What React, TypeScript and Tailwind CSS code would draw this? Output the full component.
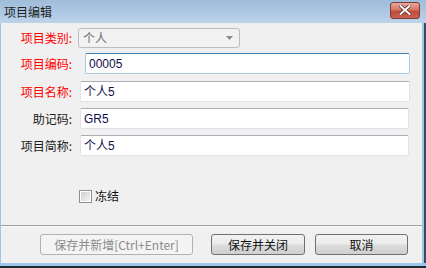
import React from "react";

const font = "font-['Noto_Sans_CJK_SC','Liberation_Sans',sans-serif]";
const inputFont = "font-['Liberation_Sans','Noto_Sans_CJK_SC',sans-serif]";

function Label({ text, red }: { text: string; red?: boolean }) {
  return (
    <div
      className={`w-[71px] shrink-0 text-right text-[12px] leading-[14px] ${
        red ? "text-[#ff0000]" : "text-[#1a1a1a]"
      }`}
    >
      {text}
    </div>
  );
}

function TextBox({ value, focused }: { value: string; focused?: boolean }) {
  return (
    <div
      className={`flex h-[21px] flex-1 items-center rounded-[2px] bg-white pl-[3px] text-[12px] text-[#10104a] ${inputFont} ${
        focused
          ? "border border-[#a8cbe6] border-t-[#3c7fb1]"
          : "border border-[#e2e3ea] border-t-[#abadb3]"
      }`}
    >
      {value}
    </div>
  );
}

function Button({ text, disabled }: { text: string; disabled?: boolean }) {
  return (
    <div
      className={`flex h-[21px] items-center justify-center rounded-[3px] border text-[12px] ${
        disabled
          ? "border-[#adb2b5] bg-[#f4f4f4] text-[#8a8a8a]"
          : "border-[#707070] bg-[linear-gradient(#f2f2f2_0%,#ebebeb_48%,#dddddd_52%,#cfcfcf_100%)] text-[#111]"
      }`}
    >
      {text}
    </div>
  );
}

export default function App() {
  return (
    <div
      className={`flex h-[268px] w-[426px] flex-col overflow-hidden bg-[#c4d8ee] ${font}`}
    >
      {/* Title bar */}
      <div className="flex h-[23px] shrink-0 items-center justify-between bg-[linear-gradient(#9fbcdb,#bcd3ea)] pl-[4px] pr-[6px]">
        <span className="text-[12px] leading-[14px] text-[#1e1e1e]">项目编辑</span>
        <div className="mt-[-3px] flex h-[17px] w-[30px] items-center justify-center rounded-[3px] border border-[#7b3a33] bg-[linear-gradient(#e8a79a_0%,#d47667_45%,#c24a3a_55%,#c9604f_100%)]">
          <svg width="12" height="10" viewBox="0 0 12 10">
            <path
              d="M1.5 1 L10.5 9 M10.5 1 L1.5 9"
              stroke="#5a2a24"
              strokeWidth="3.6"
              strokeLinecap="square"
            />
            <path
              d="M1.5 1 L10.5 9 M10.5 1 L1.5 9"
              stroke="#ffffff"
              strokeWidth="2"
              strokeLinecap="square"
            />
          </svg>
        </div>
      </div>

      {/* Window body with side frames */}
      <div className="flex h-[240px] shrink-0">
        <div className="w-[1px] bg-[#9cc6ea]" />
        {/* Client area */}
        <div className="flex w-[421px] flex-col bg-[#f0f0f0]">
          <div className="flex flex-col pr-[12px]">
            {/* 项目类别 */}
            <div className="mt-[5px] flex items-center">
              <Label text="项目类别:" red />
              <div className="ml-[6px] flex h-[20px] w-[162px] items-center justify-between rounded-[3px] border border-[#bcbcbc] bg-[#f2f2f2] pl-[4px] pr-[6px] text-[12px] text-[#6d6d6d]">
                <span>个人</span>
                <svg width="7" height="4" viewBox="0 0 7 4">
                  <path d="M0 0 H7 L3.5 4 Z" fill="#8a8a8a" />
                </svg>
              </div>
            </div>

            {/* 项目编码 */}
            <div className="mt-[5px] flex items-center">
              <Label text="项目编码:" red />
              <div className="ml-[13px] flex flex-1">
                <TextBox value="00005" focused />
              </div>
            </div>

            {/* 项目名称 */}
            <div className="mt-[7px] flex items-center">
              <Label text="项目名称:" red />
              <div className="ml-[8px] flex flex-1">
                <TextBox value="个人5" />
              </div>
            </div>

            {/* 助记码 */}
            <div className="mt-[6px] flex items-center">
              <Label text="助记码:" />
              <div className="ml-[8px] mr-[1px] flex flex-1">
                <TextBox value="GR5" />
              </div>
            </div>

            {/* 项目简称 */}
            <div className="mt-[6px] flex items-center">
              <Label text="项目简称:" />
              <div className="ml-[8px] mr-[1px] flex flex-1">
                <TextBox value="个人5" />
              </div>
            </div>

            {/* 冻结 */}
            <div className="ml-[78px] mt-[33px] flex items-center gap-[3px]">
              <div className="flex h-[13px] w-[13px] items-center justify-center border border-[#8f8f8f] bg-white">
                <div className="h-[9px] w-[9px] bg-[linear-gradient(135deg,#cfcfcf,#f4f4f4)]" />
              </div>
              <span className="text-[12px] leading-[14px] text-[#111]">冻结</span>
            </div>
          </div>

          {/* Separator */}
          <div className="mt-[22px] h-[1px] bg-[#a0a0a0]" />
          <div className="h-[1px] bg-[#fafafa]" />

          {/* Buttons */}
          <div className="mt-[7px] flex">
            <div className="ml-[39px] w-[153px]">
              <Button text="保存并新增[Ctrl+Enter]" disabled />
            </div>
            <div className="ml-[18px] w-[94px]">
              <Button text="保存并关闭" />
            </div>
            <div className="ml-[10px] w-[93px]">
              <Button text="取消" />
            </div>
          </div>
        </div>
        <div className="w-[2px] bg-[#9cc6ea]" />
        <div className="flex-1 bg-[#3a4a58]" />
      </div>

      {/* Bottom frame */}
      <div className="h-[3px] bg-[#9cc6ea]" />
      <div className="flex-1 bg-[#1c2a36]" />
    </div>
  );
}
